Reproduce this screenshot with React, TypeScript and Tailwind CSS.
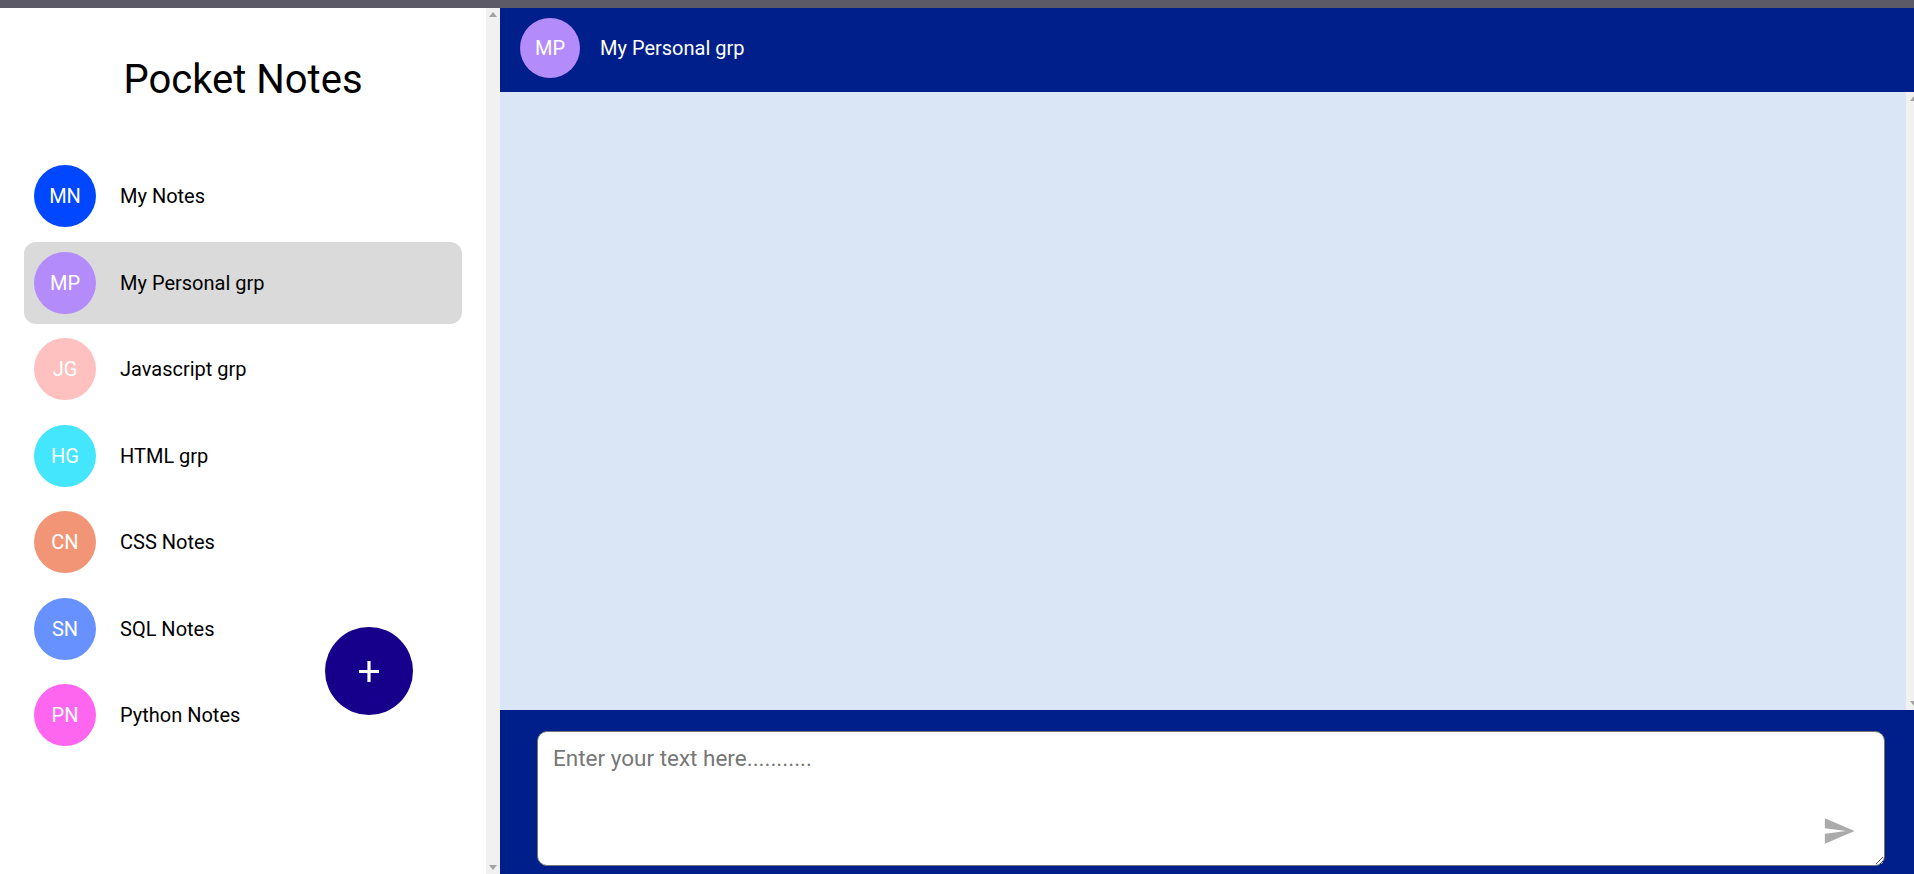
import React from "react";

const groups = [
  { initials: "MN", name: "My Notes", color: "bg-[#0047ff]" },
  { initials: "MP", name: "My Personal grp", color: "bg-[#b38bfa]", active: true },
  { initials: "JG", name: "Javascript grp", color: "bg-[#ffc0c0]" },
  { initials: "HG", name: "HTML grp", color: "bg-[#43e6fc]" },
  { initials: "CN", name: "CSS Notes", color: "bg-[#f19576]" },
  { initials: "SN", name: "SQL Notes", color: "bg-[#6691ff]" },
  { initials: "PN", name: "Python Notes", color: "bg-[#ff66f0]" },
];

function ScrollTrack({ width }: { width: string }) {
  return (
    <div className={`${width} shrink-0 h-full bg-[#f1f1f1] flex flex-col items-center justify-between py-[4px]`}>
      <svg width="8" height="5" viewBox="0 0 8 5">
        <path d="M0 5L4 0 8 5z" fill="#a3a3a3" />
      </svg>
      <svg width="8" height="5" viewBox="0 0 8 5">
        <path d="M0 0L8 0 4 5z" fill="#a3a3a3" />
      </svg>
    </div>
  );
}

export default function App() {
  return (
    <div
      className="w-[1914px] h-[874px] overflow-hidden flex flex-col bg-white"
      style={{ fontFamily: "Roboto, 'Noto Sans', sans-serif" }}
    >
      <div className="h-[8px] shrink-0 bg-[#5b5a66]" />
      <div className="flex flex-1 min-h-0">
        {/* Sidebar */}
        <aside className="relative w-[486px] shrink-0 h-full bg-white">
          <h1 className="mt-[48px] text-center text-[40px] leading-[47px] text-black font-normal">
            Pocket Notes
          </h1>
          <ul className="mt-[52px] px-6 flex flex-col gap-[4.5px]">
            {groups.map((g) => (
              <li
                key={g.initials}
                className={`h-[82px] flex items-center pl-[10px] gap-6 rounded-xl ${
                  g.active ? "bg-[#dadada]" : ""
                }`}
              >
                <div
                  className={`w-[62px] h-[62px] rounded-full ${g.color} flex items-center justify-center text-white text-[20px] shrink-0`}
                >
                  {g.initials}
                </div>
                <span className="text-[20px] text-black">{g.name}</span>
              </li>
            ))}
          </ul>
          <button className="absolute left-[325px] top-[619px] w-[88px] h-[88px] rounded-full bg-[#16008b] text-white flex items-center justify-center">
            <svg width="20" height="21" viewBox="0 0 20 21">
              <path d="M10 0v21M0 10.5h20" stroke="white" strokeWidth="3.2" />
            </svg>
          </button>
        </aside>
        <ScrollTrack width="w-[14px]" />

        {/* Main panel */}
        <main className="w-[1421px] shrink-0 h-full flex flex-col">
          <header className="h-[84px] shrink-0 bg-[#001f8b] flex items-start pt-[10px] pl-5">
            <div className="flex items-center gap-5">
              <div className="w-[60px] h-[60px] rounded-full bg-[#b38bfa] flex items-center justify-center text-white text-[20px]">
                MP
              </div>
              <span className="text-white text-[20px]">My Personal grp</span>
            </div>
          </header>
          <section className="flex-1 min-h-0 bg-[#dae5f5] flex">
            <div className="flex-1" />
            <ScrollTrack width="w-[15px]" />
          </section>
          <footer className="h-[164px] shrink-0 bg-[#001f8b] pt-[21px] pl-[37px] pr-[36px] pb-[8px]">
            <div className="relative h-full">
              <textarea
                placeholder="Enter your text here..........."
                className="w-full h-full rounded-[10px] border border-[#767676] bg-white pt-[10px] px-[15px] text-[22.5px] text-black placeholder:text-[#777777] outline-none"
                style={{ fontFamily: "Roboto, 'Noto Sans', sans-serif" }}
              />
              <svg
                className="absolute right-[29px] bottom-[18px] pointer-events-none"
                width="34"
                height="34"
                viewBox="0 0 24 24"
              >
                <path d="M2.01 21L23 12 2.01 3 2 10l15 2-15 2z" fill="#ababab" />
              </svg>
            </div>
          </footer>
        </main>
      </div>
    </div>
  );
}
